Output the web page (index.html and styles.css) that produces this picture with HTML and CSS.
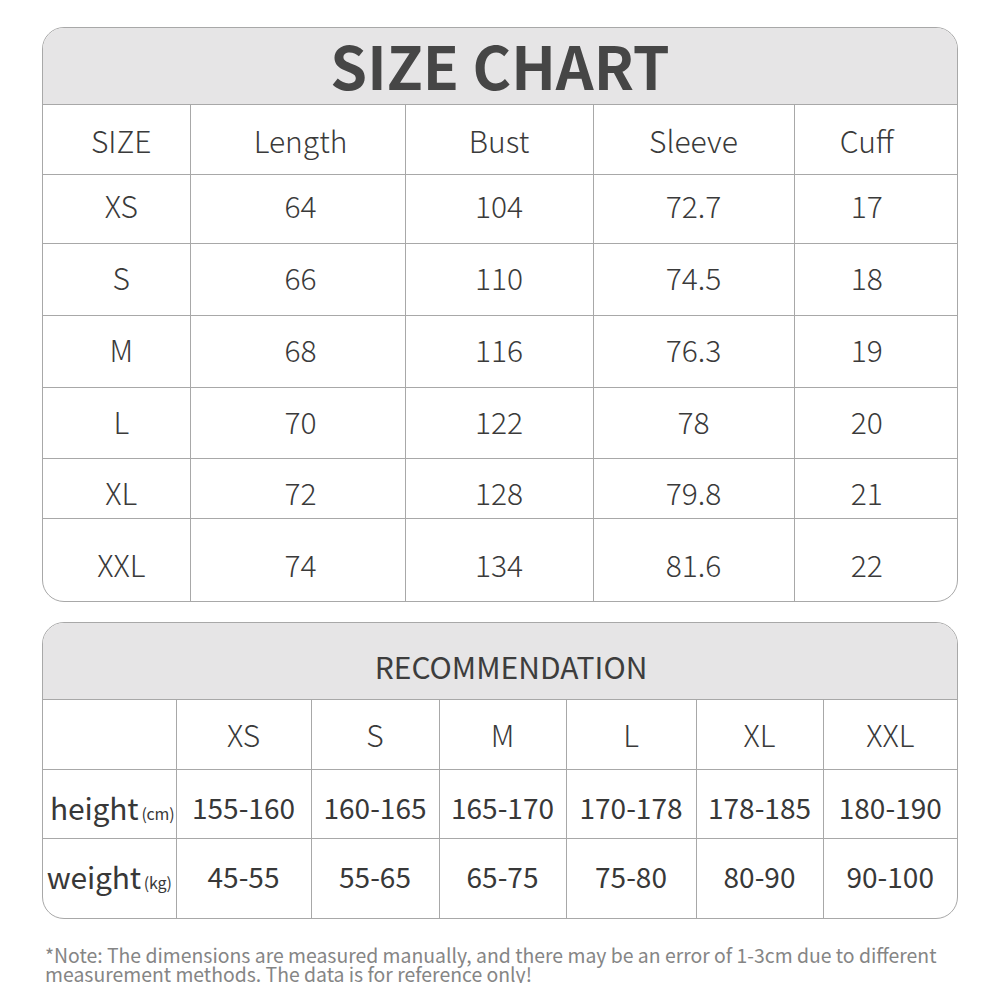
FILE: index.html
```html
<!DOCTYPE html>
<html>
<head>
<meta charset="utf-8">
<link rel="stylesheet" href="styles.css">
</head>
<body>
<div class="page">
  <div class="card chart">
    <div class="head title">SIZE CHART</div>
    <table class="grid">
      <colgroup>
        <col class="c1"><col class="c2"><col class="c3"><col class="c4"><col class="c5">
      </colgroup>
      <tr class="r70"><td class="sz">SIZE</td><td class="k2">Length</td><td>Bust</td><td>Sleeve</td><td class="k5">Cuff</td></tr>
      <tr class="r69 rxs"><td class="sz">XS</td><td class="k2">64</td><td>104</td><td>72.7</td><td class="k5">17</td></tr>
      <tr class="r72 rs"><td class="sz">S</td><td class="k2">66</td><td>110</td><td>74.5</td><td class="k5">18</td></tr>
      <tr class="r72 rs"><td class="sz">M</td><td class="k2">68</td><td>116</td><td>76.3</td><td class="k5">19</td></tr>
      <tr class="r71 rl"><td class="sz">L</td><td class="k2">70</td><td>122</td><td>78</td><td class="k5">20</td></tr>
      <tr class="r60 rxl"><td class="sz">XL</td><td class="k2">72</td><td>128</td><td>79.8</td><td class="k5">21</td></tr>
      <tr class="r82 rxxl"><td class="sz">XXL</td><td class="k2">74</td><td>134</td><td>81.6</td><td class="k5">22</td></tr>
    </table>
  </div>

  <div class="card rec">
    <div class="head sub">RECOMMENDATION</div>
    <table class="grid">
      <colgroup>
        <col class="d1"><col class="d2"><col class="d3"><col class="d4"><col class="d5"><col class="d6"><col class="d7">
      </colgroup>
      <tr class="r70 szrow"><td></td><td>XS</td><td>S</td><td>M</td><td>L</td><td>XL</td><td>XXL</td></tr>
      <tr class="r69 num hrow"><td class="lbl">height<small>(cm)</small></td><td>155-160</td><td>160-165</td><td>165-170</td><td>170-178</td><td>178-185</td><td>180-190</td></tr>
      <tr class="r80 num wrow"><td class="lbl">weight<small>(kg)</small></td><td>45-55</td><td>55-65</td><td>65-75</td><td>75-80</td><td>80-90</td><td>90-100</td></tr>
    </table>
  </div>

  <p class="note">*Note: The dimensions are measured manually, and there may be an error of 1-3cm due to different measurement methods. The data is for reference only!</p>
</div>
</body>
</html>
```

FILE: styles.css
```css
html, body {
  margin: 0;
  padding: 0;
  background: #ffffff;
}
body {
  font-family: "Noto Sans CJK SC", "Noto Sans", sans-serif;
  color: #3a3a3a;
}
.page {
  padding: 27px 0 0 42px;
  width: 916px;
}
.card {
  box-sizing: border-box;
  width: 916px;
  border: 1px solid #a8a8a8;
  border-radius: 22px;
  background: #fff;
}
.rec {
  margin-top: 20px;
}
.head {
  background: #e6e5e6;
  text-align: center;
  color: #444;
  border-radius: 21px 21px 0 0;
}
.title {
  height: 76px;
  font-size: 59px;
  font-weight: 700;
  line-height: 74px;
  color: #464646;
}
.sub {
  height: 76px;
  box-sizing: border-box;
  padding-left: 22px;
  font-size: 30px;
  font-weight: 400;
  line-height: 86px;
  color: #3d3d3d;
}
.grid {
  width: 100%;
  border-collapse: collapse;
  table-layout: fixed;
}
.grid td {
  border-top: 1px solid #a8a8a8;
  border-left: 1px solid #a8a8a8;
  text-align: center;
  padding: 0;
  font-size: 30px;
  font-weight: 300;
  color: #3a3a3a;
}
.grid td:first-child {
  border-left: none;
}
.c1 { width: 147px; }
.c2 { width: 215px; }
.c3 { width: 188px; }
.c4 { width: 201px; }
.c5 { width: auto; }
.d1 { width: 133px; }
.d2 { width: 135px; }
.d3 { width: 128px; }
.d4 { width: 127px; }
.d5 { width: 130px; }
.d6 { width: 127px; }
.d7 { width: auto; }
.grid td.sz { padding-left: 10px; }
.grid td.k2 { padding-left: 6px; }
.grid td.k5 { padding-right: 18px; }
.r60 { height: 60px; }
.r69 { height: 69px; }
.r70 { height: 70px; }
.r71 { height: 71px; }
.r72 { height: 72px; }
.r80 { height: 80px; }
.r82 { height: 82px; }
.rxs td { padding-bottom: 9px; }
.rs td { padding-bottom: 6px; }
.rl td { padding-bottom: 5px; }
.rxl td { padding-top: 6px; }
.rxxl td { padding-top: 8px; }
.szrow td { font-weight: 300; }
.grid tr.num td {
  font-weight: 400;
  font-size: 28px;
  color: #383838;
}
.grid tr.hrow td { padding-top: 6px; }
.grid tr.wrow td { padding-bottom: 4px; }
.grid tr.num td.lbl {
  font-size: 30px;
  font-weight: 400;
  text-align: center;
  white-space: nowrap;
  letter-spacing: -0.2px;
}
.grid tr.hrow td.lbl { padding-left: 6px; }
.lbl small {
  font-size: 16px;
  margin-left: 3px;
}
.note {
  margin: 26px 0 0 3px;
  width: 920px;
  font-size: 19.4px;
  line-height: 19px;
  color: #858585;
  font-weight: 400;
}
```
